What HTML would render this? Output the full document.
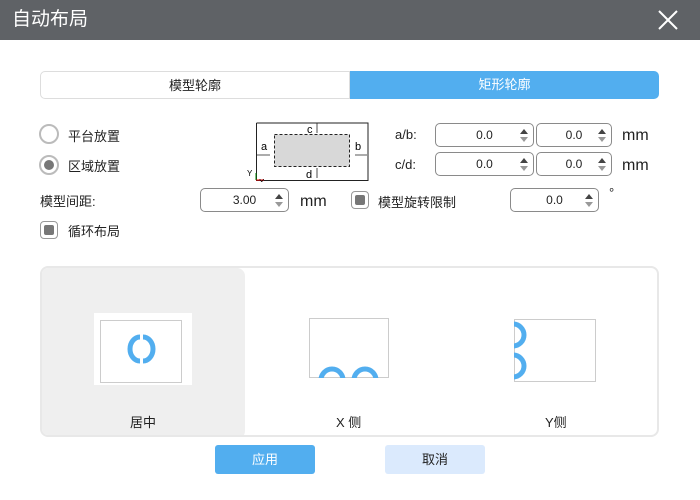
<!DOCTYPE html><html><head><meta charset="utf-8"><style>
body{margin:0;width:700px;height:500px;background:#fff;font-family:"Liberation Sans","Noto Sans CJK SC",sans-serif;font-size:13px;color:#222;position:relative;overflow:hidden}
.a{position:absolute}
.spin{position:absolute;height:24px;border:1px solid #8a8a8a;border-radius:5px;box-sizing:border-box;background:#fff;text-align:center;line-height:22px;font-size:12px}
.spin:after{content:"";position:absolute;right:5px;top:5px;border:4px solid transparent;border-bottom:5px solid #444;border-top:0}
.spin:before{content:"";position:absolute;right:5px;top:13px;border:4px solid transparent;border-top:5px solid #999;border-bottom:0}
.chk{position:absolute;width:18px;height:18px;border:1px solid #999;border-radius:4px;box-sizing:border-box;background:#fff}
.chk:after{content:"";position:absolute;left:3px;top:3px;width:10px;height:10px;background:#777;border-radius:2px}
</style></head><body>
<div class="a" style="left:0;top:0;width:700px;height:40px;background:#5f6266;color:#fff;font-size:19px;line-height:40px;text-indent:12px">自动布局</div>
<svg class="a" style="left:657px;top:9px" width="22" height="22"><path d="M2 2L20 20M20 2L2 20" stroke="#fff" stroke-width="2"/></svg>
<div class="a" style="left:40px;top:71px;width:310px;height:28px;border:1px solid #ddd;box-sizing:border-box;border-radius:5px 0 0 5px;text-align:center;line-height:27px;font-size:13px">模型轮廓</div>
<div class="a" style="left:350px;top:71px;width:309px;height:28px;background:#52aeef;border-radius:0 5px 5px 0;color:#fff;text-align:center;line-height:28px">矩形轮廓</div>
<div class="a" style="left:39px;top:124px;width:20px;height:20px;border:2px solid #bbb;border-radius:50%;box-sizing:border-box"></div>
<div class="a" style="left:68px;top:126px">平台放置</div>
<div class="a" style="left:39px;top:155px;width:20px;height:20px;border:2px solid #bbb;border-radius:50%;box-sizing:border-box"><div style="margin:3px;width:10px;height:10px;border-radius:50%;background:#777"></div></div>
<div class="a" style="left:68px;top:156px">区域放置</div>
<div class="a" style="left:40px;top:191px">模型间距:</div>
<div class="chk" style="left:40px;top:221px"></div>
<div class="a" style="left:68px;top:221px">循环布局</div>
<svg class="a" style="left:246px;top:120px" width="125" height="62" font-family="Liberation Sans" font-size="11">
<path d="M10.5 3V60.5H122V3H10.5" fill="none" stroke="#222"/>
<rect x="28.5" y="14.5" width="75" height="32" fill="#d8d8d8" stroke="#222" stroke-dasharray="3 2"/>
<text x="61" y="13">c</text><text x="15" y="30">a</text><text x="109" y="30">b</text><text x="60" y="58">d</text>
<path d="M71 3V13M71 48V58M11 35H24M109 35H121" stroke="#222" stroke-width="0.8"/>
<path d="M10 60H18" stroke="red"/><path d="M10 60V53" stroke="green"/>
<text x="1" y="56" font-size="8">Y</text><text x="13" y="65" font-size="8">X</text>
</svg>
<div class="a" style="left:395px;top:127px">a/b:</div>
<div class="a" style="left:395px;top:157px">c/d:</div>
<div class="spin" style="left:435px;top:123px;width:99px">0.0</div>
<div class="spin" style="left:536px;top:123px;width:76px">0.0</div>
<div class="spin" style="left:435px;top:152px;width:99px">0.0</div>
<div class="spin" style="left:536px;top:152px;width:76px">0.0</div>
<div class="a" style="left:622px;top:127px;font-size:16px">mm</div>
<div class="a" style="left:622px;top:157px;font-size:16px">mm</div>
<div class="spin" style="left:200px;top:188px;width:89px">3.00</div>
<div class="a" style="left:300px;top:193px;font-size:16px">mm</div>
<div class="chk" style="left:351px;top:191px"></div>
<div class="a" style="left:378px;top:192px">模型旋转限制</div>
<div class="spin" style="left:510px;top:188px;width:89px">0.0</div>
<div class="a" style="left:609px;top:185px;font-size:13px">°</div>
<div class="a" style="left:40px;top:266px;width:619px;height:171px;border:2px solid #e8e8e8;border-radius:8px;box-sizing:border-box;overflow:hidden">
<div class="a" style="left:0;top:0;width:203px;height:171px;background:#efefef;border-radius:0 8px 8px 0"></div></div>
<div class="a" style="left:94px;top:313px;width:98px;height:72px;background:#fff"></div>
<svg class="a" style="left:0;top:0" width="700" height="500">
<rect x="100.5" y="320.5" width="81" height="62" fill="none" stroke="#ccc"/>
<g fill="none" stroke="#52aeef" stroke-width="5"><path d="M140 337A10 12 0 0 0 140 361"/><path d="M143 337A10 12 0 0 1 143 361"/></g>
<rect x="309.5" y="318.5" width="79" height="59" fill="none" stroke="#ccc"/>
<clipPath id="c1"><rect x="309" y="318" width="80" height="60"/></clipPath>
<g clip-path="url(#c1)" fill="none" stroke="#52aeef" stroke-width="5"><circle cx="332" cy="380" r="11"/><circle cx="365" cy="380" r="11"/></g>
<rect x="514.5" y="319.5" width="81" height="62" fill="none" stroke="#ccc"/>
<clipPath id="c2"><rect x="514" y="319" width="82" height="63"/></clipPath>
<g clip-path="url(#c2)" fill="none" stroke="#52aeef" stroke-width="5"><circle cx="513" cy="335" r="11"/><circle cx="513" cy="366" r="11"/></g>
</svg>
<div class="a" style="left:130px;top:412px">居中</div>
<div class="a" style="left:336px;top:412px">X 侧</div>
<div class="a" style="left:545px;top:412px">Y侧</div>
<div class="a" style="left:215px;top:445px;width:100px;height:29px;background:#52aeef;border-radius:3px;color:#fff;text-align:center;line-height:29px">应用</div>
<div class="a" style="left:385px;top:445px;width:100px;height:29px;background:#dbeafd;border-radius:3px;text-align:center;line-height:29px">取消</div>
</body></html>
